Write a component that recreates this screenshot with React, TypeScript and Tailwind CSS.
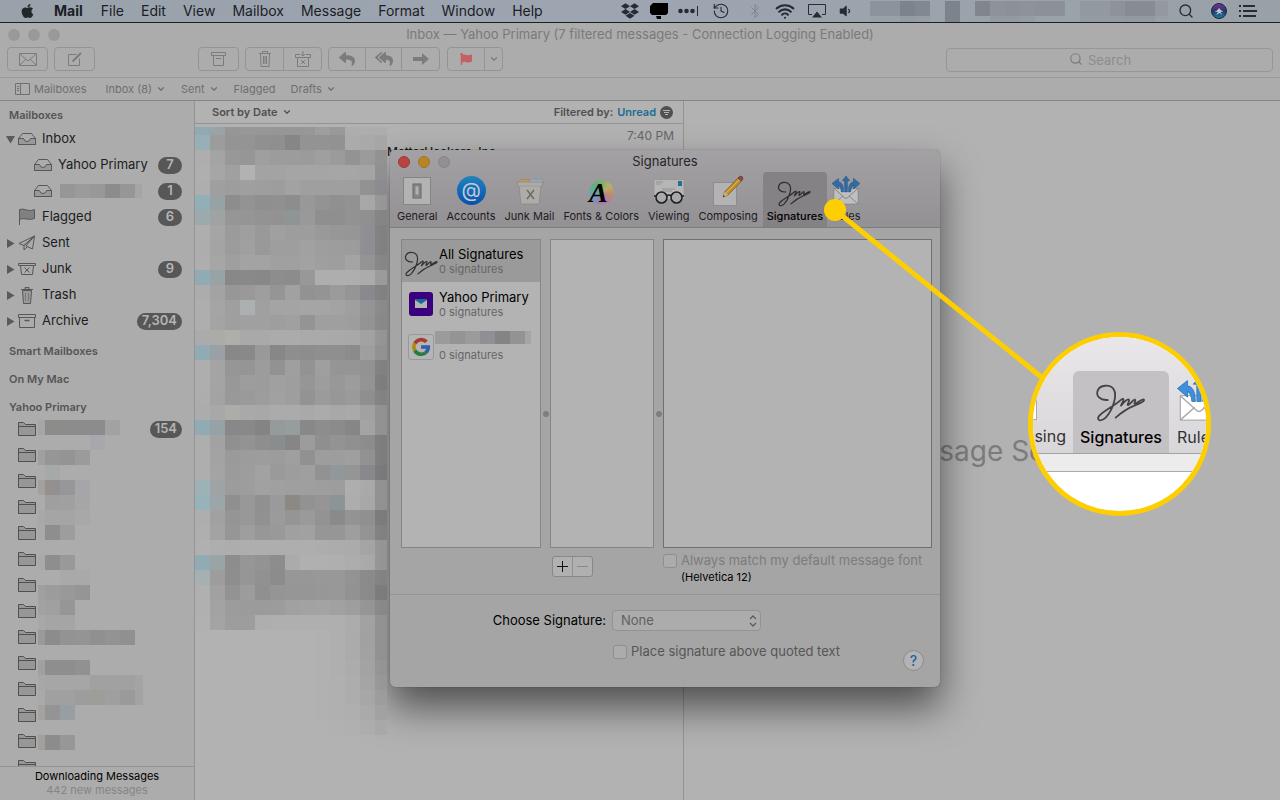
import { ReactNode } from "react";
import { FaApple, FaDropbox, FaReply, FaReplyAll, FaFlag, FaVolumeDown } from "react-icons/fa";
import { Bluetooth, ChevronDown, History, Search, Wifi } from "lucide-react";

// each cell is a grey level ("a4"), a full colour ("8fafb8") or empty ("..")
const menuBlocks = [
  "8d939a 8d939a 7d838b 82888f .. 7d838b .. 80868c 8d9398 8b9196 8d9398 8b9196 8b9196 .. 9299a0 9299a0 8d9399 868c92 868c92 9299a0",
];
const menuBlocksLow = [
  "98a0a8 98a0a8 949ba4 969da5 .. 7d838b .. 99a1aa 939aa2 939aa2 959ca3 99a1aa 99a1aa .. 949ba2 949ba2 949ba2 9299a0 9299a0 989fa5",
];

const accountBlocks = ["96 9b 98 8d8c8a 96 a5"];

const folderBlocks = [
  "a6 8c8d8a 8c 8c 8c a2",
  ".. .. .. .. a8a8ac",
  "a0 96 94 9b",
  ".. a5aaa9",
  "a59f9d 949090 97979a a5a5aa",
  ".. 9f a0 a6",
  "a8 a5 a5 a8",
  "a9 8e 9d",
  "",
  "a9 8e 99",
  ".. .. a9 a9",
  "a0 9c 99 95",
  "a2 a0 96",
  "a8 a5 a5",
  "9a 8c 93 94 90 93 90",
  "",
  "a0 8e 8e 91",
  "a7 a6 a6 a6 a1 a1 a1 a4",
  "a9 a0 a0 9d 9f9d99 9f 9a a3",
  "a5a29f 94 989fa2",
  "",
  "a39f9c 8c 97",
];

const messageBlocksTop = ["8fa9b2 98a3a4 94 95 95 93 94 95 9c 97 ad ad ad"];
const messageBlocks = [
  "96afb8 9a 91 91 8d 8c 82 90 90 8f ab a9 a6",
  "ae a3 96 93 9e 9a 9a 99 9d 99 90 99 90",
  "af a5 9f b2 a2 a2 a4 a4 a4 a5 a5 a4 8f",
  "ae 9d 9b 9d 9c 9b a1 9d 9e 9d 9e 90 8a8a90",
  "8fafb8 95a1a4 89 90 8c 8d 8a 96 90 8d 8f a8 98",
  "9aaaae 9da2a2 93 92 90 8f 8c9292 97 8c 8c 8f 8e 84",
  "ae a4 99 9d 97 9f 9b 9b 97 95 94 8c8c92 80",
  "ad a3 9a 9f 97 9c 9c a0 9c 9b 9a 8c8c92 80",
  "ae a5 9e a2 a2 9f 9f a1 9e 9c a3 92 86",
  "8dabb4 95a2a4 84 85 84 89 88 96 ae ae ae ac 9c",
  "ac a2 95 97 9c 92 a0 8f 91 99 93 86868c 80",
  "ae a4 9d acb0b0 9f a3 a3 a4 a4 a2 9e 93 8a",
  "ae a3 9e 9f 9f 9c 9f 91 9d 9e 9c 92 88",
  "ab aaaca8 aeaeaa a9 a9 ab ab aa aa a9 a8 a2 96",
  "8dabb4 98a0a3 84 85 97 83 8b 8a 8c 8c 88 9e 92",
  "ae a3 93 92 9a 8f 9d 90 9e 92 93 91 80",
  "ae a3 96 9b 9a 9f 9c 93 9b 96 9b 92 7c",
  "ad a2 97 98 9b a0 9c 90 99 95 98 8d 82",
  "ac a7 acaca8 a9 a8 ab ab a9 ab a7 a9 a1 92",
  "8dabb4 92a2a6 84 85 80 939899 959a9b 84 8a 87 82 a4 92",
  "ae a1 8d 90 8b 84898a 82 9a 8c 90 8d 8a 7c",
  "ae a2 98 9a 9b 9a 9d 8e 9b 9b 9e 90 7c",
  "ae a3 99 9b a1 98 9b 9d 8f 8e9698 93 86868a 78787c",
  "9bb2b8 9da2a2 9a 9b a0 9f 9e 9e 9c 9b ae aa 92",
  "96b2ba 9aa4a6 8c 96 8d 98 88847f 8f 92 879295 ad a8 92",
  "ae a0 92 96 8e 99 92 98 90 86 91 8e 7a",
  "af a2 93 9c 95 97 9f a0 93 94 9d 92 80",
  "b0 ae ad ae ae ae ae ae ad ac ab a5 96",
  "8dabb4 98a3a4 8a 93 90 89 ab b0 b0 af ad aa 96",
  "a4b0b4 9b 8b 93 8e 88 95 95 96 96 90 88 82",
  "b0 a0 90 9a 8d 92 93 94 95 96 8f 88 7a",
  "b0 a2 9a 99 99 9a a0 a1 a2 a0 9d 94 88",
  "b1 a3 9b 9b ae af af af af af ac a2 92",
  ".. .. .. .. .. .. .. .. b1 af ab a1 92",
  ".. .. .. .. .. .. .. .. b1 af ab a2 92",
  ".. .. .. .. .. .. .. .. b1 af ac a3 95",
  ".. .. .. .. .. .. .. .. b1 b0 ad a5 98",
  ".. .. .. .. .. .. .. .. b1 b0 ad a7 9d",
  ".. .. .. .. .. .. .. .. b1 b0 af aa a2",
  ".. .. .. .. .. .. .. .. .. b1 b0 ad a8",
];

function Blocks({ rows, first = "w-[15px]", last = "w-[15px]", height = "h-[15px]" }: any) {
  return (
    <div aria-hidden="true">
      {rows.map((row: string, r: number) => (
        <div key={r} className={`flex ${height}`}>
          {row.split(" ").map((cell, i) => {
            const color = cell.length === 2 ? cell + cell + cell : cell;
            const width = i === 0 ? first : i === 12 ? last : "w-[15px]";
            return (
              <span
                key={i}
                className={`h-full shrink-0 ${width}`}
                style={{ backgroundColor: cell === ".." || !cell ? "transparent" : `#${color}` }}
              />
            );
          })}
        </div>
      ))}
    </div>
  );
}

function Signature({ className = "" }) {
  return (
    <svg viewBox="286 192 156 116" className={className} fill="none" stroke="currentColor" strokeWidth="5.500" strokeLinecap="round" strokeLinejoin="round">
      <path d="M324 241C301 242 288 228 294 213C301 195 331 193 342 209C354 228 339 271 318 294C306 306 292 304 296 292C304 277 340 262 366 239C372 235 374 240 368 249L364 258C373 248 384 236 388 240C391 245 380 256 385 256C393 254 400 238 406 240C410 244 400 253 407 252C414 250 424 238 432 239C438 244 420 251 404 258C384 266 364 280 348 294" />
    </svg>
  );
}

function RulesIcon({ className = "" }) {
  return (
    <svg viewBox="0 0 30 32" className={className}>
      <rect x="2" y="13" width="26" height="17" fill="#fff" stroke="#aaa" strokeWidth="0.8" />
      <path d="M2 30l10-9M28 30l-10-9M2 13l11 10q2 2 4 0l11-10" fill="none" stroke="#aaa" />
      <path d="M15 0l-4 5h2.500v12h3V5H19zM0 8l7-5.500v3.500q5.500 1 5.500 11H10q-.5-6-3-7v4zM30 8l-7-5.500v3.500q-5.500 1-5.500 11H20q.5-6 3-7v4z" fill="#3f8fdc" stroke="#2468ac" strokeWidth="0.5" />
    </svg>
  );
}

function GeneralIcon() {
  return (
    <svg width="28" height="28" viewBox="0 0 28 28">
      <rect x="0.5" y="0.5" width="27" height="27" fill="#b3b3b3" stroke="#858385" />
      <rect x="10" y="7" width="8" height="14" fill="#8a8a8a" stroke="#666" />
      <rect x="12" y="9" width="4" height="9" fill="#b0b0b0" stroke="#777" strokeWidth="0.7" />
    </svg>
  );
}

function JunkMailIcon() {
  return (
    <svg width="28" height="28" viewBox="0 0 28 28">
      <path d="M2 6l3-4 5 1 3-1 2 4z" fill="#c49a5c" stroke="#a07838" strokeWidth="0.5" />
      <path d="M12 6l4-4 5 1 5-1 1 5z" fill="#9ab0c0" stroke="#6f8ea5" strokeWidth="0.5" />
      <path d="M1 5h26l-1 4h-1l-2 18H5L3 9H2z" fill="#aeaca8" stroke="#8b8983" strokeWidth="0.8" />
      <path d="M3 9h22" stroke="#99978f" strokeWidth="0.8" />
      <path d="M11 13l7 9M18 13l-7 9" stroke="#6d6a63" strokeWidth="1.500" />
    </svg>
  );
}

function ViewingIcon() {
  return (
    <svg width="32" height="28" viewBox="0 0 32 28">
      <rect x="1" y="2.500" width="30" height="20" fill="#b6b6b6" stroke="#969496" strokeWidth="0.8" />
      <path d="M3 5h7M3 7h5M9 12h13M9 14h10" stroke="#8c8c8c" strokeWidth="0.8" />
      <rect x="25" y="4" width="4" height="5" fill="#256f91" />
      <circle cx="8.500" cy="20.500" r="5.500" fill="#a9a8aa" stroke="#1f1f1f" strokeWidth="1.600" />
      <circle cx="23.500" cy="20.500" r="5.500" fill="#a9a8aa" stroke="#1f1f1f" strokeWidth="1.600" />
      <path d="M13.500 19q2.500-2 5 0M3 19H1M29 19h2" fill="none" stroke="#1f1f1f" strokeWidth="1.600" />
    </svg>
  );
}

function ComposingIcon() {
  return (
    <svg width="32" height="32" viewBox="0 0 32 32">
      <rect x="1.500" y="7.500" width="23" height="23" fill="#b3b3b3" stroke="#8d8b8d" />
      <path d="M11 22l1.500-5L26 3l3.500 3L16 20z" fill="#c3922a" stroke="#6f5215" strokeWidth="0.7" />
      <path d="M13.500 18.500L27.500 4.500" stroke="#e0b24a" />
      <path d="M26 3l2-2q3 0 3 3l-1.500 2z" fill="#8e4a50" stroke="#5b3336" strokeWidth="0.6" />
      <path d="M11 22l1.500-5 3.500 3z" fill="#c9b78c" />
      <path d="M11 22l.7-2 1.300 1.200z" fill="#222" />
    </svg>
  );
}

function TrayIcon() {
  return (
    <svg width="18" height="14" viewBox="0 0 18 14" fill="#999" stroke="#575757" strokeLinejoin="round">
      <path d="M0.500 6.500L4.500 1.500h9l4 5v6h-17z" fill="none" />
      <path d="M0.500 6.500h5q.500 3 3.500 3t3.500-3h5v6h-17z" />
    </svg>
  );
}

function FlagIcon() {
  return (
    <svg width="18" height="18" viewBox="0 0 18 18" fill="#808080" stroke="#5a5a5a">
      <path d="M1.500 17V1.500q3-1 7 .5t8-.5v9q-4 1.500-8 .5t-7 .5" />
    </svg>
  );
}

function PlaneIcon() {
  return (
    <svg width="18" height="16" viewBox="0 0 18 16" fill="none" stroke="#575757" strokeLinejoin="round">
      <path d="M16.500 1L1 8.500l5 2zM16.500 1L6 10.500V15l3-3M16.500 1l-2 13L8 11z" />
    </svg>
  );
}

function JunkIcon() {
  return (
    <svg width="18" height="14" viewBox="0 0 18 14" fill="none" stroke="#575757">
      <path d="M0.500 1.500h17v2h-17zM2.500 3.500l1 9h11l1-9" />
      <path d="M6.500 5.500l5 5M11.500 5.500l-5 5" />
    </svg>
  );
}

function BinIcon() {
  return (
    <svg width="18" height="18" viewBox="0 0 18 18" fill="#9a9a9a" stroke="#575757">
      <path d="M4.500 4.500l1 13h7l1-13zM3 3.500h12M7 3V1.500h4V3" />
      <path d="M7.500 7v8M10.500 7v8" stroke="#7a7a7a" />
    </svg>
  );
}

function ArchiveIcon() {
  return (
    <svg width="18" height="14" viewBox="0 0 18 14" fill="none" stroke="#575757">
      <path d="M0.500 0.500h17v3h-17zM1.500 3.500v10h15v-10" />
      <path d="M6.500 6.500h5" strokeWidth="1.500" />
    </svg>
  );
}

function FolderIcon() {
  return (
    <svg width="18" height="16" viewBox="0 0 18 16" fill="#979797" stroke="#505050">
      <path d="M0.500 14.500v-13h5l2 2h10v11zM0.500 5.500h17" />
    </svg>
  );
}

const menus = ["File", "Edit", "View", "Mailbox", "Message", "Format", "Window", "Help"];

function MenuBar() {
  return (
    <header className="flex h-[23px] shrink-0 items-center border-b border-[#1d2126] bg-linear-to-r from-[#99a2ab] via-[#9da5b1] to-[#98a1a6] pr-[23px] pl-5 text-[#1b2026]">
      <FaApple className="h-4 w-[15px] text-[#22272c]" />
      <nav className="ml-[19px] flex gap-[17px] text-sm">
        <button className="mr-px font-bold">Mail</button>
        {menus.map((menu) => (
          <button key={menu}>{menu}</button>
        ))}
      </nav>
      <div className="ml-auto flex items-center text-[#272b33]">
        <FaDropbox className="h-[18px] w-[18px]" />
        <svg width="18" height="16" viewBox="0 0 18 16" className="ml-[11px] text-black" fill="currentColor">
          <path d="M3 0h15v10l-2 2H2L0 10V3zM6 13h5v3H7z" />
        </svg>
        <svg width="21" height="10" viewBox="0 0 21 10" className="ml-[10px]" fill="currentColor">
          <circle cx="2.500" cy="5" r="2.300" />
          <circle cx="8.500" cy="5" r="2.300" />
          <circle cx="14.500" cy="5" r="2.300" />
          <path d="M19 0h1v10h-1z" />
        </svg>
        <History className="ml-[13px] h-[18px] w-[18px]" strokeWidth={1.500} />
        <Bluetooth className="ml-[17px] h-4 w-4 text-[#7f858e]" strokeWidth={1.500} />
        <Wifi className="ml-3 h-5 w-5" strokeWidth={2.500} />
        <svg width="18" height="14" viewBox="0 0 18 14" className="ml-[13px]" fill="none" stroke="currentColor">
          <path d="M4 10.500H0.500v-10h17v10H14" />
          <path d="M9 7.500l5 6H4z" fill="currentColor" stroke="none" />
        </svg>
        <FaVolumeDown className="ml-3 h-3.5 w-[14px]" />
        <div className="ml-[18px] w-[298px] overflow-hidden">
          <Blocks rows={menuBlocks} />
          <Blocks rows={menuBlocksLow} height="h-[6px]" />
        </div>
        <Search className="ml-[10px] h-4 w-4" strokeWidth={2} />
        <span className="ml-[17px] flex h-4 w-4 items-center justify-center rounded-full border border-[#1b2440] bg-linear-to-b from-[#7a2d86] via-[#23356f] to-[#1c7d96]">
          <svg width="10" height="10" viewBox="0 0 10 10" fill="#b6cbd8">
            <path d="M5 2q1 2 4.500 3.500-2.500 0-3 .5l2 3-3-2-3.500 2 2-3Q3 5.500 .5 6 4 4.500 5 2z" />
          </svg>
        </span>
        <svg width="18" height="12" viewBox="0 0 18 12" className="ml-3" fill="currentColor">
          <path d="M0 0h2v2H0zM0 5h2v2H0zM0 10h2v2H0zM4 0h12v2H4zM4 5h14v2H4zM4 10h13v2H4z" />
        </svg>
      </div>
    </header>
  );
}

function ToolButton({ label, width = "w-[37px]", children }: { label: string; width?: string; children: ReactNode }) {
  return (
    <button aria-label={label} className={`flex h-full items-center justify-center ${width}`}>
      {children}
    </button>
  );
}

const group = "flex h-6 divide-x divide-[#949494] rounded border border-[#949494] text-[#7c7c7c]";

function WindowToolbar() {
  return (
    <div className="shrink-0 border-b border-[#999] bg-[#acacac]">
      <div className="relative flex h-6 items-center justify-center text-[13px] text-[#7a7a7a]">
        <div className="absolute left-2 flex gap-2">
          <span className="h-3 w-3 rounded-full bg-[#999]" />
          <span className="h-3 w-3 rounded-full bg-[#999]" />
          <span className="h-3 w-3 rounded-full bg-[#999]" />
        </div>
        <h1>Inbox — Yahoo Primary (7 filtered messages - Connection Logging Enabled)</h1>
      </div>
      <div className="flex h-[30px] items-start px-[7px]">
        <div className={group}>
          <ToolButton label="Get mail" width="w-[39px]">
            <svg width="18" height="13" viewBox="0 0 18 13" fill="none" stroke="currentColor">
              <path d="M0.500 0.500h17v12h-17zM1 1l8 7 8-7M1 12l6-6M17 12l-6-6" />
            </svg>
          </ToolButton>
        </div>
        <div className={`ml-1.5 ${group}`}>
          <ToolButton label="New message" width="w-[39px]">
            <svg width="15" height="15" viewBox="0 0 15 15" fill="none" stroke="currentColor">
              <path d="M9.500 2.500h-8v11h11v-7" />
              <path d="M5.500 9.500L14 1" strokeWidth="2" />
            </svg>
          </ToolButton>
        </div>
        <div className={`ml-[103px] ${group}`}>
          <ToolButton label="Archive" width="w-[39px]">
            <svg width="15" height="14" viewBox="0 0 15 14" fill="none" stroke="currentColor">
              <path d="M0.500 0.500h14v3h-14zM2.500 3.500v10h10v-10M5 6.500h5" />
            </svg>
          </ToolButton>
        </div>
        <div className={`ml-1.5 ${group}`}>
          <ToolButton label="Delete" width="w-[38px]">
            <svg width="14" height="16" viewBox="0 0 14 16" fill="none" stroke="currentColor">
              <path d="M1 2.500h12M4.500 2V.5h5V2M2.500 3l.5 12.500h8L11.500 3M5.500 5v8M7 5v8M8.500 5v8" />
            </svg>
          </ToolButton>
          <ToolButton label="Junk">
            <svg width="16" height="16" viewBox="0 0 16 16" fill="none" stroke="currentColor">
              <path d="M5 3.500H.5v3h15v-3H11M2.500 6.500v9h11v-9M8 0v5M6 3l2 2 2-2M6 9l4 4M10 9l-4 4" />
            </svg>
          </ToolButton>
        </div>
        <div className={`ml-1.5 ${group}`}>
          <ToolButton label="Reply">
            <FaReply className="h-4 w-4" />
          </ToolButton>
          <ToolButton label="Reply all" width="w-[36px]">
            <FaReplyAll className="h-4 w-5" />
          </ToolButton>
          <ToolButton label="Forward">
            <svg width="16" height="12" viewBox="0 0 16 12" fill="currentColor">
              <path d="M0 4h9V0l7 6-7 6V8H0z" />
            </svg>
          </ToolButton>
        </div>
        <div className={`ml-[7px] ${group}`}>
          <ToolButton label="Flag">
            <FaFlag className="h-3 w-3 text-[#c45f65]" />
          </ToolButton>
          <ToolButton label="Flag colors" width="w-[17px]">
            <ChevronDown className="h-2.5 w-2.5" strokeWidth={3} />
          </ToolButton>
        </div>
        <div className="relative ml-auto h-6 w-[327px]">
          <Search className="absolute top-[5px] left-[123px] h-3.5 w-3.5 text-[#7c7c7c]" strokeWidth={2} />
          <input
            type="search"
            aria-label="Search"
            placeholder="Search"
            className="h-6 w-full rounded border border-[#979797] pl-[141px] text-[13px] placeholder:text-[#8d8d8d]"
          />
        </div>
      </div>
    </div>
  );
}

function Favorite({ label, menu = true }: { label: string; menu?: boolean }) {
  return (
    <button className="flex items-center gap-1">
      {label}
      {menu && <ChevronDown className="h-2.5 w-2.5" strokeWidth={3} />}
    </button>
  );
}

function FavoritesBar() {
  return (
    <nav className="flex h-[23px] shrink-0 items-center gap-[15px] border-b border-[#858585] bg-[#acacac] pl-[15px] text-[11px] text-[#6f6f6f]">
      <button className="mr-1 flex items-center gap-1">
        <svg width="15" height="12" viewBox="0 0 15 12" fill="none" stroke="currentColor">
          <path d="M0.500 0.500h14v11h-14zM5.500 0.500v11M2 3.500h2M2 5.500h2M2 7.500h2" />
        </svg>
        Mailboxes
      </button>
      <Favorite label="Inbox (8)" />
      <Favorite label="Sent" />
      <Favorite label="Flagged" menu={false} />
      <Favorite label="Drafts" />
    </nav>
  );
}

function Badge({ children }: { children: ReactNode }) {
  return (
    <span className="ml-auto flex h-[17px] min-w-6 items-center justify-center rounded-full bg-[#575757] px-[5px] text-[13px] font-semibold text-[#b4b4b4]">
      {children}
    </span>
  );
}

const mailboxes = [
  { label: "Inbox", icon: <TrayIcon />, arrow: "open" },
  { label: "Yahoo Primary", icon: <TrayIcon />, count: "7", child: true },
  { label: "", icon: <TrayIcon />, count: "1", child: true },
  { label: "Flagged", icon: <FlagIcon />, count: "6" },
  { label: "Sent", icon: <PlaneIcon />, arrow: "closed" },
  { label: "Junk", icon: <JunkIcon />, count: "9", arrow: "closed" },
  { label: "Trash", icon: <BinIcon />, arrow: "closed" },
  { label: "Archive", icon: <ArchiveIcon />, count: "7,304", arrow: "closed" },
];

function Sidebar() {
  return (
    <aside className="flex w-[195px] shrink-0 flex-col border-r border-[#949494] bg-[#acacac]">
      <div className="min-h-0 flex-1 overflow-hidden pt-1.5">
        <h2 className="h-4 pl-[9px] text-[11px] leading-4 font-semibold text-[#555]">Mailboxes</h2>
        <ul className="mt-[3px] text-[13px] text-[#1d1d1d]">
          {mailboxes.map((box, i) => (
            <li key={i} className={`flex h-[26px] items-center pr-3 ${box.child ? "pl-[22px]" : "pl-1.5"}`}>
              <span className="flex w-3 shrink-0">
                {box.arrow && (
                  <svg width="9" height="9" viewBox="0 0 9 9" fill="#5a5a5a">
                    <path d={box.arrow === "open" ? "M0 1h9L4.500 8.500z" : "M1 0v9l7.500-4.500z"} />
                  </svg>
                )}
              </span>
              {box.icon}
              <span className="ml-1.5 whitespace-nowrap">
                {box.label || (
                  <span className="ml-0.5 block w-[82px] overflow-hidden">
                    <Blocks rows={accountBlocks} height="h-[14px]" />
                  </span>
                )}
              </span>
              {box.count && <Badge>{box.count}</Badge>}
            </li>
          ))}
        </ul>
        <div className="mt-[9px] flex flex-col gap-3 pl-[9px] text-[11px] leading-4 font-semibold text-[#555]">
          <h2>Smart Mailboxes</h2>
          <h2>On My Mac</h2>
          <h2>Yahoo Primary</h2>
        </div>
        <div className="relative mt-px">
          <ul>
            {Array.from({ length: 14 }, (_, i) => (
              <li key={i} className="flex h-[26px] items-center pr-3 pl-[18px]">
                <FolderIcon />
                {i === 0 && <Badge>154</Badge>}
              </li>
            ))}
          </ul>
          <div className="absolute top-1 left-[38px] w-[105px] overflow-hidden">
            <Blocks rows={folderBlocks} first="w-[7px]" />
          </div>
        </div>
      </div>
      <div className="h-[34px] shrink-0 border-t border-[#959595] pt-0.5 text-center text-[11px] leading-[14px]">
        <p className="text-black">Downloading Messages</p>
        <p className="text-[#858585]">442 new messages</p>
      </div>
    </aside>
  );
}

function MessageList() {
  return (
    <section className="flex w-[489px] shrink-0 flex-col border-r border-[#949494]">
      <div className="flex h-[23px] shrink-0 items-center border-b border-[#949494] pr-2.5 pl-[17px] text-[11px] font-semibold text-[#505050]">
        <button className="flex items-center gap-1">
          Sort by Date <ChevronDown className="h-2.5 w-2.5" strokeWidth={3} />
        </button>
        <span className="ml-auto">Filtered by:</span>
        <button className="ml-1 text-[#1b6c97]">Unread</button>
        <svg width="13" height="13" viewBox="0 0 13 13" className="ml-1">
          <circle cx="6.500" cy="6.500" r="6.500" fill="#505050" />
          <path d="M3 4.500h7M4 6.500h5M5 8.500h3" stroke="#b3b3b3" />
        </svg>
      </div>
      <div className="flex min-h-0 flex-1 pt-[3px]">
        <div className="relative z-20 w-48 shrink-0 opacity-90">
          <Blocks rows={messageBlocksTop} height="h-2" last="w-3" />
          <Blocks rows={messageBlocks} last="w-3" />
        </div>
        <div className="flex-1 pr-[9px]">
          <p className="pt-px text-right text-xs leading-4 text-[#666]">7:40 PM</p>
          <p className="text-xs leading-4 font-medium text-[#1a1a1a]">MatterHackers, Inc.</p>
        </div>
      </div>
    </section>
  );
}

const tabs = [
  { label: "General", icon: <GeneralIcon /> },
  {
    label: "Accounts",
    icon: (
      <span className="flex h-[29px] w-[29px] items-center justify-center rounded-full bg-linear-to-b from-[#2383bb] to-[#0b4fae] pb-0.5 text-xl leading-none text-[#c0cbd6]">
        @
      </span>
    ),
  },
  { label: "Junk Mail", icon: <JunkMailIcon /> },
  {
    label: "Fonts & Colors",
    icon: (
      <span className="mt-1 flex h-[25px] w-[25px] items-center justify-center rounded-full bg-[conic-gradient(#7fae6a,#bcae68,#bd8a72,#b877a8,#8f86b8,#6fa3b4,#5fae8a,#7fae6a)] font-['Liberation_Serif',serif] text-[28px] leading-none font-bold text-black italic">
        <span className="-ml-1.5">A</span>
      </span>
    ),
  },
  { label: "Viewing", icon: <ViewingIcon /> },
  { label: "Composing", icon: <ComposingIcon /> },
  { label: "Signatures", icon: <Signature className="mt-1.5 h-[26px] w-[35px] text-[#2e2e2e]" />, selected: true },
  { label: "Rules", icon: <RulesIcon className="h-8 w-7 brightness-75" /> },
];

function PreferencesDialog() {
  return (
    <section
      role="dialog"
      aria-label="Signatures"
      className="absolute top-[150px] left-[390px] z-10 w-[550px] overflow-hidden rounded-[5px] bg-[#a5a5a5] shadow-[0_0_1px_rgba(0,0,0,0.6),0_20px_38px_rgba(0,0,0,0.55)]"
    >
      <div className="border-b border-[#7d7b7d] bg-linear-to-b from-[#a4a1a5] to-[#949195]">
        <div className="relative flex h-[22px] items-center justify-center pt-px text-[13px] text-[#262626]">
          <div className="absolute left-2 flex gap-2">
            <button aria-label="Close" className="h-3 w-3 rounded-full border border-[#a43633] bg-[#b84441]" />
            <button aria-label="Minimize" className="h-3 w-3 rounded-full border border-[#a27521] bg-[#b88524]" />
            <button aria-label="Zoom" className="h-3 w-3 rounded-full border border-[#878587] bg-[#929092]" />
          </div>
          <h2>Signatures</h2>
        </div>
        <div className="flex gap-px pl-[3px] text-[11px] text-[#1c1c1c]">
          {tabs.map((tab) => (
            <button
              key={tab.label}
              className={`flex h-[55px] flex-col items-center rounded-t px-1 whitespace-nowrap ${tab.selected ? "bg-[#858286] font-medium text-black" : ""}`}
            >
              <span className="flex h-[37px] items-center justify-center">{tab.icon}</span>
              <span className="leading-[14px]">{tab.label}</span>
            </button>
          ))}
        </div>
      </div>

      <div className="flex h-80 pt-[11px] pr-2 pl-[11px]">
        <ul className="w-[140px] shrink-0 border border-[#858585] bg-[#b3b3b3] text-[13px] leading-4 text-black">
          <li className="flex h-[42px] items-center bg-[#9a9a9a] pl-0.5">
            <Signature className="mt-1.5 h-[26px] w-[35px] text-[#333]" />
            <div>
              <p>All Signatures</p>
              <p className="text-[11px] leading-[14px] text-[#666]">0 signatures</p>
            </div>
          </li>
          <li className="flex h-[43px] items-center pl-[7px]">
            <span className="mr-1.5 flex h-6 w-6 items-center justify-center rounded-[3px] bg-[#3b007d]">
              <svg width="12" height="9" viewBox="0 0 12 9">
                <path d="M0 0h12v9H0z" fill="#b3b3b3" />
                <path d="M0 0h12v1L6 5 0 1z" fill="#16689a" />
              </svg>
            </span>
            <div>
              <p>Yahoo Primary</p>
              <p className="text-[11px] leading-[14px] text-[#666]">0 signatures</p>
            </div>
          </li>
          <li className="flex h-[43px] items-center pl-1.5">
            <span className="flex h-[26px] w-[26px] items-center justify-center rounded-[3px] border border-[#989898] bg-[#b5b5b5]">
              <svg width="20" height="20" viewBox="0 0 20 20" fill="none" strokeWidth="3.600">
                <path d="M15.500 4.800A7.300 7.300 0 0 0 3.800 6.500" stroke="#a83a30" />
                <path d="M3.800 6.500a7.300 7.300 0 0 0 0 7" stroke="#b08a10" />
                <path d="M3.800 13.500a7.300 7.300 0 0 0 11 2.100" stroke="#2a7a40" />
                <path d="M14.800 15.600A7.300 7.300 0 0 0 17.300 10H10" stroke="#2e5fa8" />
              </svg>
            </span>
            <div className="ml-px w-24 overflow-hidden">
              <Blocks rows={["9b 94 9b 8f9096 84 93 a5"]} height="h-[13px]" />
              <p className="mt-1 pl-1 text-[11px] leading-[14px] text-[#666]">0 signatures</p>
            </div>
          </li>
        </ul>
        <div className="flex w-[9px] shrink-0 items-center justify-center pt-10">
          <span className="h-1.5 w-1.5 rounded-full bg-[#7e7e7e]" />
        </div>
        <div className="w-[104px] shrink-0 border border-[#858585] bg-[#b3b3b3]" />
        <div className="flex w-[9px] shrink-0 items-center justify-center pt-10">
          <span className="h-1.5 w-1.5 rounded-full bg-[#7e7e7e]" />
        </div>
        <textarea aria-label="Signature text" className="flex-1 resize-none border border-[#707070] bg-[#b3b3b3]" />
      </div>

      <div className="flex h-[47px] items-start border-b border-[#949494] pt-1.5 pl-[162px]">
        <div className="mt-0.5 flex h-[21px] w-[41px] divide-x divide-[#909090] rounded-[3px] border border-[#888] bg-[#b0b0b0]">
          <button aria-label="Add signature" className="flex flex-1 items-center justify-center">
            <svg width="11" height="11" viewBox="0 0 11 11" stroke="#111">
              <path d="M5.500 0v11M0 5.500h11" />
            </svg>
          </button>
          <button aria-label="Remove signature" disabled className="flex flex-1 items-center justify-center">
            <svg width="11" height="11" viewBox="0 0 11 11" stroke="#888">
              <path d="M0 5.500h11" />
            </svg>
          </button>
        </div>
        <div className="ml-[70px]">
          <label className="flex h-[14px] items-center gap-1 text-[13px] text-[#7c7c7c]">
            <input type="checkbox" disabled className="h-[14px] w-[14px] appearance-none rounded-[3px] border border-[#8f8f8f] bg-[#acacac]" />
            Always match my default message font
          </label>
          <p className="mt-0.5 pl-[18px] text-[11px] leading-[14px] text-black">(Helvetica 12)</p>
        </div>
      </div>

      <div className="flex h-[92px] pt-[15px] pr-4">
        <div className="flex-1">
          <div className="flex h-[21px] items-center text-[13px]">
            <label htmlFor="signature" className="w-[216px] text-right text-black">
              Choose Signature:
            </label>
            <div className="relative ml-1.5">
              <select id="signature" className="h-[21px] w-[149px] appearance-none rounded border border-[#939393] bg-[#acacac] pl-2 text-[#606060]">
                <option>None</option>
              </select>
              <svg width="8" height="12" viewBox="0 0 8 12" className="pointer-events-none absolute top-[5px] right-1" fill="none" stroke="#5c5c5c" strokeWidth="1.300">
                <path d="M1 4l3-3 3 3M1 8l3 3 3-3" />
              </svg>
            </div>
          </div>
          <label className="mt-[13px] ml-[223px] flex h-4 items-center gap-1 text-[13px] text-[#565656]">
            <input type="checkbox" className="h-[14px] w-[14px] appearance-none rounded-[3px] border border-[#8f8f8f] bg-[#acacac]" />
            Place signature above quoted text
          </label>
        </div>
        <button aria-label="Help" className="mt-10 flex h-[21px] w-[21px] items-center justify-center rounded-full border border-[#8a8a8a] bg-[#b3b3b3] text-sm font-medium text-[#2163a3]">
          ?
        </button>
      </div>
    </section>
  );
}

function Callout() {
  return (
    <>
      <svg width="240" height="200" viewBox="820 195 240 200" className="absolute top-[195px] left-[820px] z-30">
        <path d="M835 210L1045 380" stroke="#fdcf02" strokeWidth="5" />
        <circle cx="835" cy="210" r="11" fill="#fdcf02" />
      </svg>
      <div className="absolute top-[332px] left-[1028px] z-30 flex h-[184px] w-[183px] flex-col overflow-hidden rounded-full border-[5px] border-[#fdcf02] bg-white text-base text-[#333]">
        <div className="flex h-[117px] shrink-0 items-end border-b border-[#a5a2a5] bg-linear-to-b from-[#eae7eb] to-[#d9d6da]">
          <div className="flex h-[82px] w-10 shrink-0 flex-col items-end pr-[7px]">
            <span className="mt-6 mr-[29px] h-[25px] w-10 shrink-0 border border-[#aaa] bg-white" />
            <span className="mt-1.5 leading-5">sing</span>
          </div>
          <div className="flex h-[82px] w-24 shrink-0 flex-col items-center rounded-t-md bg-[#c4c1c5] font-medium text-black">
            <Signature className="mt-3 h-10 w-[52px] text-[#444]" />
            <span className="mt-1 leading-5">Signatures</span>
          </div>
          <div className="flex h-[82px] shrink-0 flex-col items-start pl-2">
            <RulesIcon className="mt-1.5 h-[46px] w-11" />
            <span className="mt-1 leading-5">Rules</span>
          </div>
        </div>
        <div className="h-[18px] shrink-0 border-b border-[#a9a9a9] bg-[#ececec]" />
      </div>
    </>
  );
}

export default function App() {
  return (
    <div className="relative flex h-screen flex-col overflow-hidden bg-[#b2b2b2] font-[Inter,'Liberation_Sans',sans-serif]">
      <MenuBar />
      <WindowToolbar />
      <FavoritesBar />
      <main className="flex min-h-0 flex-1">
        <Sidebar />
        <MessageList />
        <section className="flex flex-1 items-center justify-center text-[28px] text-[#7c7c7c]">
          No Message Selected
        </section>
      </main>
      <PreferencesDialog />
      <Callout />
    </div>
  );
}
